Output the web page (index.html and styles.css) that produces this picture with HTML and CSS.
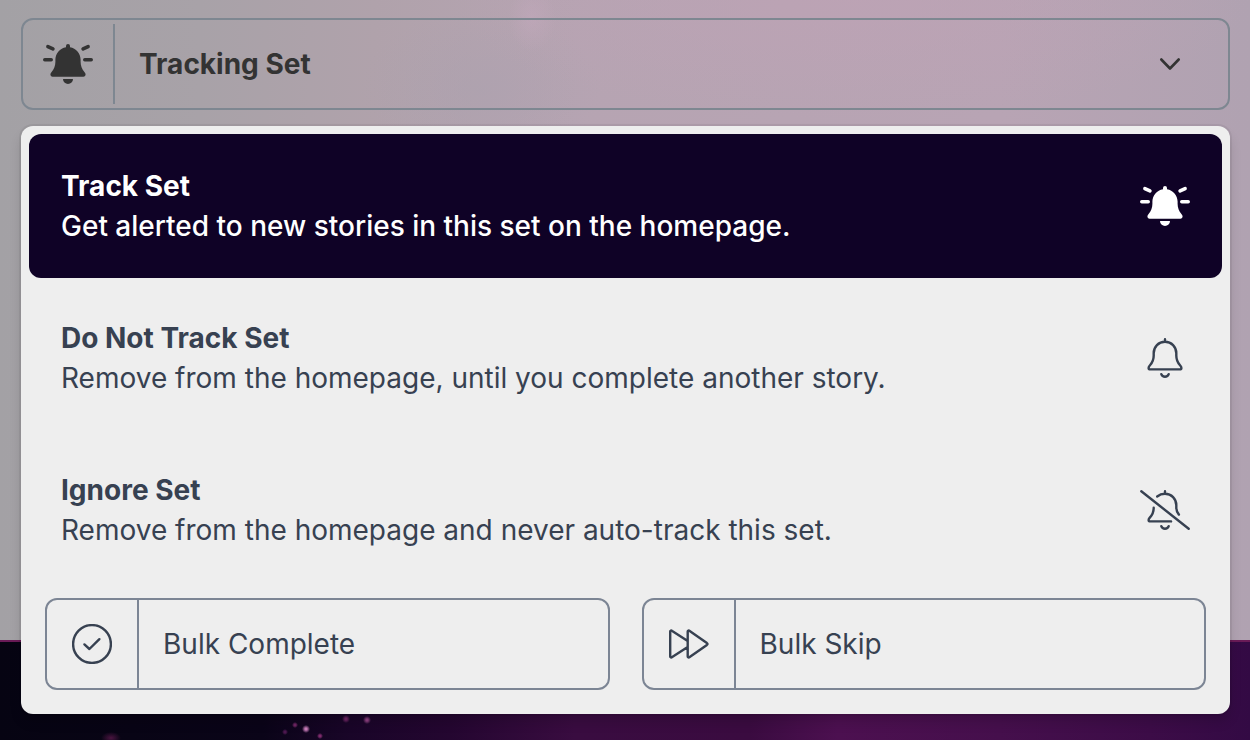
FILE: index.html
```html
<!DOCTYPE html>
<html lang="en">
<head>
    <meta charset="UTF-8">
    <meta name="viewport" content="width=device-width, initial-scale=1.0">
    <title>Tracking Set</title>
    <link rel="stylesheet" href="styles.css">
</head>
<body>
    <main class="panel">
        <div class="tracking">
            <button type="button" class="select-btn" aria-expanded="true" aria-controls="menu">
                <span class="select-icon">
                    <svg class="bell" viewBox="0 0 50 40" aria-hidden="true">
                        <path fill="currentColor" d="M23 3.200V2a2 2 0 0 1 4 0v1.200C33 4.200 37.600 9.400 37.600 15.600v2.200c0 4 1.300 7.200 3.800 10.200.8 1 1.200 1.800 1.200 2.600 0 1.200-.9 2.100-2.200 2.100H9.600c-1.300 0-2.200-.9-2.200-2.100 0-.8.4-1.600 1.200-2.600 2.500-3 3.800-6.200 3.800-10.200v-2.200C12.400 9.400 17 4.200 23 3.200zM20 35h10a5 5 0 0 1-10 0z"/>
                        <path fill="none" stroke="currentColor" stroke-width="3.600" stroke-linecap="round" d="M1.800 15.700h6.400M41.800 15.700h6.400M4.900 2.600l5 2.300M45.100 2.600l-5 2.300"/>
                    </svg>
                </span>
                <span class="select-label">Tracking Set</span>
                <svg class="chevron" viewBox="0 0 24 24" aria-hidden="true">
                    <path fill="none" stroke="currentColor" stroke-width="2.600" stroke-linecap="round" stroke-linejoin="round" d="M3.300 7.500l8.700 9 8.700-9"/>
                </svg>
            </button>

            <div class="menu" id="menu">
                <button type="button" class="option active">
                    <span class="option-text">
                        <strong>Track Set</strong>
                        <span>Get alerted to new stories in this set on the homepage.</span>
                    </span>
                    <svg class="bell" viewBox="0 0 50 40" aria-hidden="true">
                        <path fill="currentColor" d="M23 3.200V2a2 2 0 0 1 4 0v1.200C33 4.200 37.600 9.400 37.600 15.600v2.200c0 4 1.300 7.200 3.800 10.200.8 1 1.200 1.800 1.200 2.600 0 1.200-.9 2.100-2.200 2.100H9.600c-1.300 0-2.200-.9-2.200-2.100 0-.8.4-1.600 1.200-2.600 2.500-3 3.800-6.200 3.800-10.200v-2.200C12.400 9.400 17 4.200 23 3.200zM20 35h10a5 5 0 0 1-10 0z"/>
                        <path fill="none" stroke="currentColor" stroke-width="3.600" stroke-linecap="round" d="M1.800 15.700h6.400M41.800 15.700h6.400M4.900 2.600l5 2.300M45.100 2.600l-5 2.300"/>
                    </svg>
                </button>
                <button type="button" class="option">
                    <span class="option-text">
                        <strong>Do Not Track Set</strong>
                        <span>Remove from the homepage, until you complete another story.</span>
                    </span>
                    <svg class="bell line" viewBox="0 0 50 40" aria-hidden="true">
                        <path d="M25 1.200v2.600M25 3.800c-6.500 0-11.300 5-11.300 11.400v2.400c0 4-1.200 7-3.700 9.700-1 1.100-1.400 1.800-1.400 2.600 0 1 .7 1.500 1.700 1.500h29.400c1 0 1.700-.5 1.700-1.500 0-.8-.4-1.500-1.400-2.600-2.500-2.700-3.700-5.700-3.700-9.700v-2.400C36.300 8.800 31.500 3.800 25 3.800zM21.300 36.200c1.200 3.400 6.200 3.400 7.400 0"/>
                    </svg>
                </button>
                <button type="button" class="option">
                    <span class="option-text">
                        <strong>Ignore Set</strong>
                        <span>Remove from the homepage and never auto-track this set.</span>
                    </span>
                    <svg class="bell line" viewBox="0 0 50 40" aria-hidden="true">
                        <path d="M1.300 1.300l47.400 37.400M25 1.200v2.600M17.200 6.500c2.200-1.800 4.900-2.700 7.800-2.700 6.500 0 11.300 5 11.300 11.400v2.400c0 2.800.9 5 2.600 7M13.700 17.700c0 4-1.200 7-3.700 9.700-1 1.100-1.400 1.800-1.400 2.500 0 1 .7 1.500 1.700 1.500h20.800M21.300 36.200c1.200 3.400 6.200 3.400 7.400 0"/>
                    </svg>
                </button>

                <div class="bulk">
                    <button type="button" class="bulk-btn">
                        <span class="bulk-icon">
                            <svg class="line" viewBox="0 0 40 40" aria-hidden="true">
                                <circle cx="20" cy="20" r="18.900"/>
                                <path d="M12.400 20.400l5 4.600 10-9.800"/>
                            </svg>
                        </span>
                        <span class="bulk-label">Bulk Complete</span>
                    </button>
                    <button type="button" class="bulk-btn">
                        <span class="bulk-icon">
                            <svg class="line" viewBox="0 0 40 40" aria-hidden="true">
                                <path d="M18.700 17L3.200 6.900C2.200 6.200 1.200 6.600 1.200 7.600v24.800c0 1 1 1.400 2 .7L18.700 23M18.700 7.600c0-1 1-1.400 2-.7l17.200 12.200c.8.600.8 1.200 0 1.800L20.700 33.100c-1 .7-2 .3-2-.7z"/>
                            </svg>
                        </span>
                        <span class="bulk-label">Bulk Skip</span>
                    </button>
                </div>
            </div>
        </div>
    </main>
    <footer class="sky"></footer>
</body>
</html>
```

FILE: styles.css
```css
* {
    box-sizing: border-box;
}

body {
    margin: 0;
    min-height: 100vh;
    display: flex;
    flex-direction: column;
    background-color: #0b0419;
    font-family: Inter, "Liberation Sans", sans-serif;
    font-size: 28px;
    line-height: 40px;
    color: #374151;
}

button {
    margin: 0;
    padding: 0;
    border: 0;
    background: none;
    color: inherit;
    font: inherit;
    text-align: left;
    cursor: pointer;
}

svg {
    display: block;
    flex: none;
}

.panel {
    flex: 1;
    padding: 18px 20px 0 21px;
    border-bottom: 2px solid #6a1b57;
    background:
        radial-gradient(ellipse 24px 34px at 532px 18px, #c4a9bd80, transparent),
        radial-gradient(ellipse 400px 120px at 850px 0, #bfa2b599, transparent),
        radial-gradient(ellipse 120px 80px at 480px 90px, #aaa1af80, transparent),
        linear-gradient(90deg, #a3a1a5, #a8a2a8 16%, #b0a2ab 30%, #b6a4b2 46%, #b8a4b4 80%, #b0a2b1);
}

.tracking {
    position: relative;
}

.select-btn {
    display: flex;
    align-items: center;
    width: 100%;
    padding: 4px 46px 4px 0;
    border: 2px solid #7e8791;
    border-radius: 12px;
    color: #333;
}

.select-icon {
    display: flex;
    align-items: center;
    justify-content: center;
    width: 92px;
    height: 80px;
    border-right: 2px solid #7e8791;
}

.select-label {
    flex: 1;
    padding-left: 24px;
    font-weight: 700;
}

.bell {
    width: 50px;
    height: 40px;
}

.chevron {
    width: 24px;
    height: 24px;
}

.line {
    fill: none;
    stroke: currentColor;
    stroke-width: 2.4;
    stroke-linecap: round;
    stroke-linejoin: round;
}

/* opens over the panel, under the select */
.menu {
    position: absolute;
    top: 100%;
    left: 0;
    right: 0;
    display: flex;
    flex-direction: column;
    gap: 8px;
    margin-top: 16px;
    padding: 8px;
    border-radius: 12px;
    background-color: #eee;
    box-shadow: 0 0 0 2px #0000000d, 0 8px 12px #00000022;
}

.option {
    display: flex;
    align-items: center;
    justify-content: space-between;
    padding: 32px;
    border-radius: 12px;
}

.option.active {
    background-color: #0f0226;
    color: #fff;
    font-weight: 500;
}

.option-text {
    display: flex;
    flex-direction: column;
}

.option-text strong {
    font-weight: 700;
}

.bulk {
    display: grid;
    grid-template-columns: 1fr 1fr;
    gap: 32px;
    margin-top: 8px;
    padding: 0 16px 16px;
}

.bulk-btn {
    display: flex;
    align-items: center;
    border: 2px solid #7c8594;
    border-radius: 12px;
}

.bulk-icon {
    display: flex;
    align-items: center;
    justify-content: center;
    width: 92px;
    height: 88px;
    border-right: 2px solid #7c8594;
}

.bulk-icon svg {
    width: 40px;
    height: 40px;
}

.bulk-label {
    padding-left: 24px;
}

/* night sky with a few stars */
.sky {
    height: 98px;
    background:
        radial-gradient(circle at 306px 87px, #c77bb8 1px, transparent 4px),
        radial-gradient(circle at 367px 78px, #8d3f80 1px, transparent 4px),
        radial-gradient(circle at 346px 77px, #6d2462 1px, transparent 4px),
        radial-gradient(circle at 295px 83px, #6d2462 1px, transparent 3px),
        radial-gradient(circle at 320px 94px, #7d2b6c 1px, transparent 3px),
        radial-gradient(circle at 285px 90px, #4d1850 1px, transparent 3px),
        radial-gradient(ellipse 10px 6px at 111px 96px, #4a1440, transparent),
        linear-gradient(90deg, #060412, #0a0418 21%, #190528 28%, #240630 36%, #390c40 46%, #3a0b40 60%, #4c1050 67%, #450f4c 80%, #3c0c47 92%, #330a44);
}
```
